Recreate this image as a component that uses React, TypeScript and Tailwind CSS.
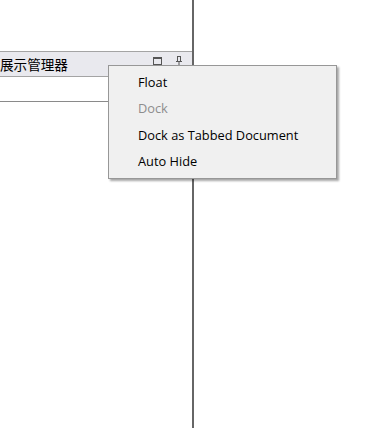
export default function App() {
  const items = [
    { label: "Float", disabled: false },
    { label: "Dock", disabled: true },
    { label: "Dock as Tabbed Document", disabled: false },
    { label: "Auto Hide", disabled: false },
  ];

  return (
    <div
      className="relative w-[381px] h-[428px] bg-white overflow-hidden flex"
      style={{ fontFamily: '"Open Sans", "Noto Sans CJK SC", sans-serif' }}
    >
      {/* left docked pane */}
      <div className="w-[194px] h-full flex flex-col border-r-2 border-[#666666]">
        <div className="h-[51px] bg-white" />
        {/* title bar */}
        <div className="h-[26px] flex items-center justify-between border-y border-[#a4a4a4] bg-[#e9e9ee]">
          <span
            className="text-[13.6px] leading-none text-black mt-[1px]"
            style={{ fontFamily: '"Noto Sans CJK SC", sans-serif' }}
          >
            展示管理器
          </span>
          <div className="flex items-center gap-[14px] pr-[10px] -mt-[6px]">
            <svg width="9" height="8" viewBox="0 0 9 8">
              <rect x="0.5" y="0.5" width="8" height="7" fill="none" stroke="#555" />
              <rect x="0" y="0" width="9" height="2" fill="#555" />
            </svg>
            <svg width="6" height="10" viewBox="0 0 6 10">
              <rect x="1.5" y="0.5" width="3" height="5" fill="none" stroke="#555" />
              <rect x="0" y="5" width="6" height="1" fill="#555" />
              <rect x="2.5" y="6" width="1" height="4" fill="#555" />
            </svg>
          </div>
        </div>
        <div className="h-[25px] border-b border-[#8a8a8a] bg-white" />
        <div className="flex-1 bg-white" />
      </div>
      <div className="flex-1 bg-white" />

      {/* context menu */}
      <div className="absolute left-[108px] top-[65px] w-[229px] h-[114px] bg-[#f0f0f0] border border-[#979797] shadow-[2px_2px_2px_rgba(0,0,0,0.35)] flex flex-col pt-[3px]">
        {items.map((item, index) => (
          <div
            key={index}
            className={`h-[26.5px] flex items-center pl-[29px] text-[12.8px] ${
              item.disabled ? "text-[#8d8d8d]" : "text-black"
            }`}
          >
            {item.label}
          </div>
        ))}
      </div>
    </div>
  );
}
